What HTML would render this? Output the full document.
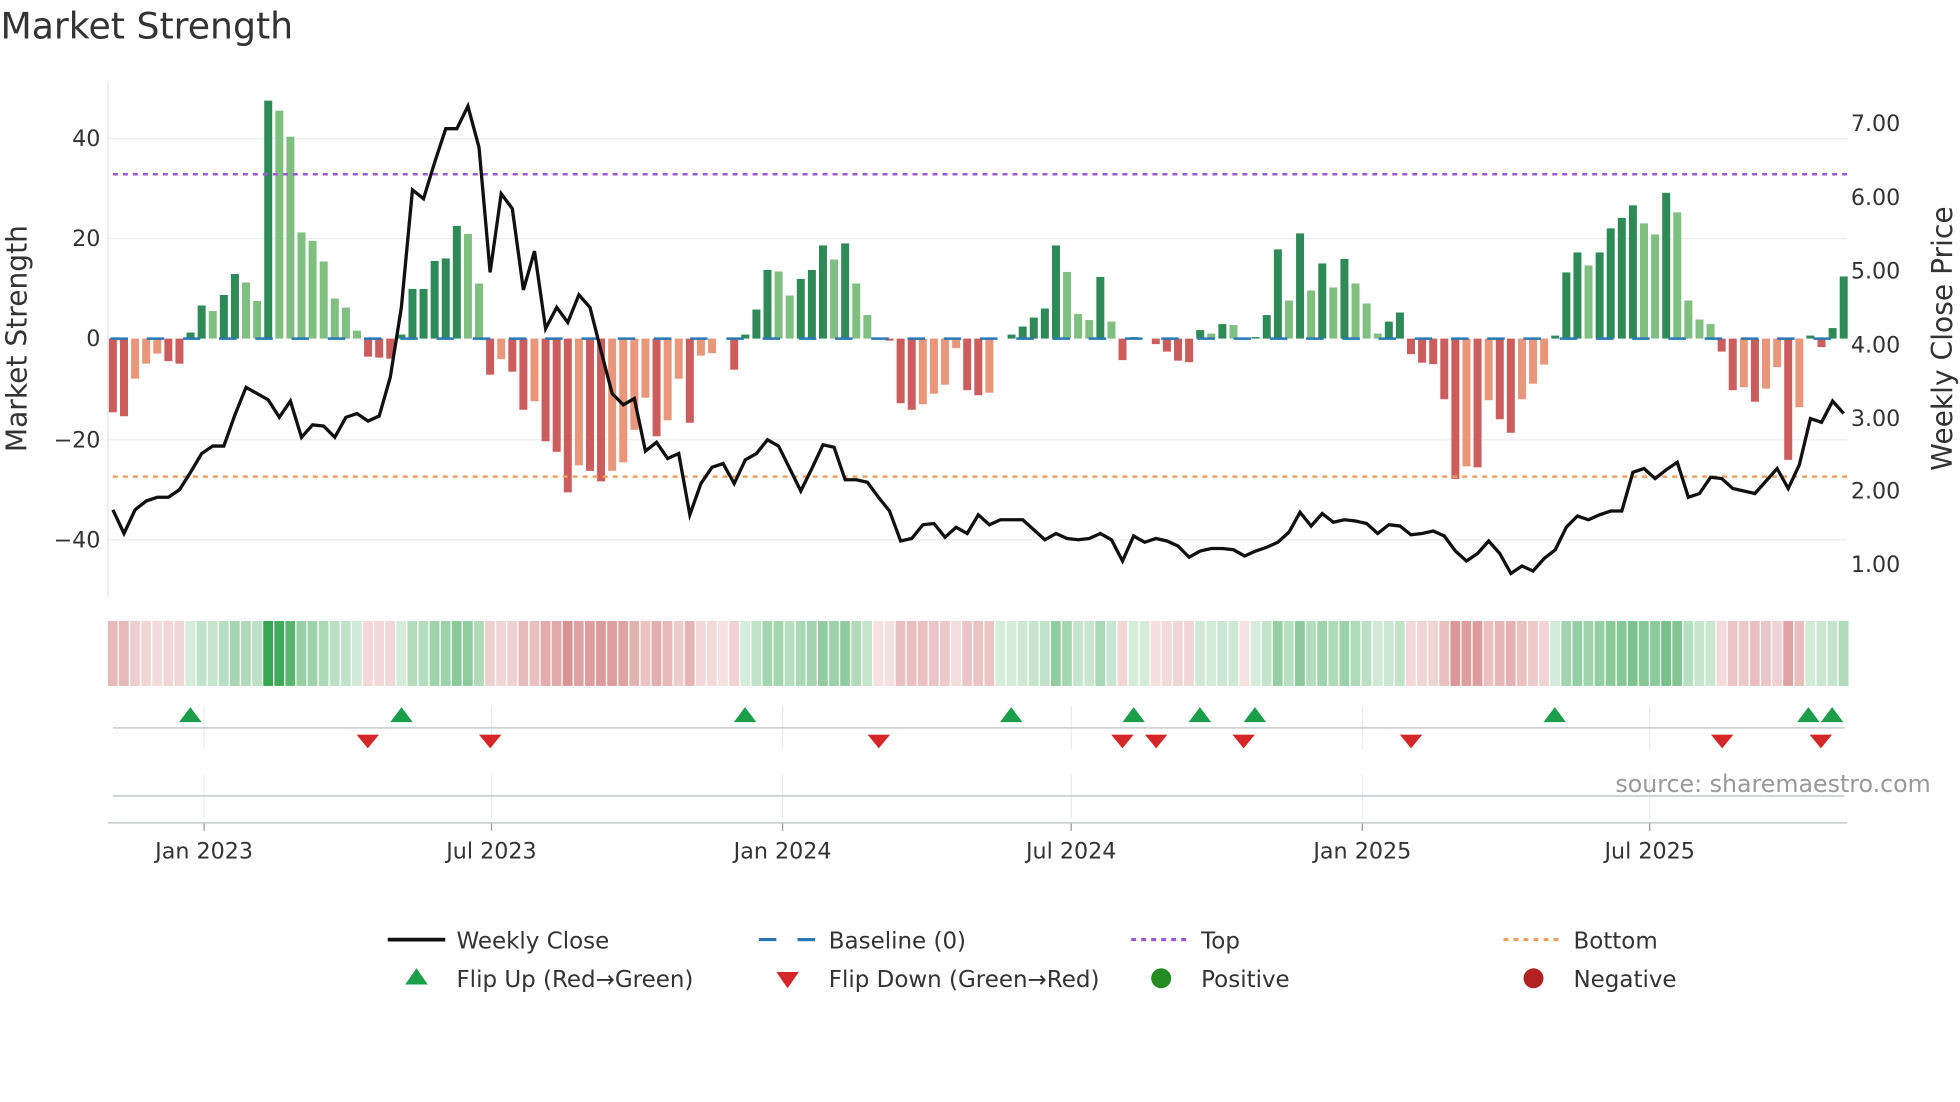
<!DOCTYPE html>
<html><head><meta charset="utf-8"><style>
html,body{margin:0;padding:0;background:#fff;}
svg{display:block;font-family:"DejaVu Sans","Liberation Sans",sans-serif;}
.a{fill:#2e8b57}.b{fill:#7fbf7f}.c{fill:#cd5c5c}.d{fill:#e9967a}
.p{fill:#2ca048}.n{fill:#cc6a6a}
.t{fill:#333;font-size:17.8px}
.lg{fill:#333;font-size:18.4px}
</style></head><body>
<svg width="1960" height="1102" viewBox="0 0 1568 882" xmlns="http://www.w3.org/2000/svg">
<rect width="1568" height="882" fill="#fff"/>
<text x="0" y="31" font-size="29" fill="#333">Market Strength</text>

<g stroke="#eceff1" stroke-width="1">
<line x1="86" x2="1478" y1="111" y2="111"/>
<line x1="86" x2="1478" y1="191" y2="191"/>
<line x1="86" x2="1478" y1="352" y2="352"/>
<line x1="86" x2="1478" y1="432" y2="432"/>
</g>
<line x1="86" x2="86" y1="65" y2="478" stroke="#e6e6e6" stroke-width="1"/>

<g class="t" text-anchor="end">
<text x="80" y="117">40</text>
<text x="80" y="197">20</text>
<text x="80" y="277">0</text>
<text x="80" y="358">−20</text>
<text x="80" y="438">−40</text>
</g>
<g class="t">
<text x="1481" y="105">7.00</text>
<text x="1481" y="164">6.00</text>
<text x="1481" y="223">5.00</text>
<text x="1481" y="282">4.00</text>
<text x="1481" y="341">3.00</text>
<text x="1481" y="399">2.00</text>
<text x="1481" y="458">1.00</text>
</g>
<text transform="translate(21,271) rotate(-90)" text-anchor="middle" font-size="22.5" fill="#333">Market Strength</text>
<text transform="translate(1562,271) rotate(-90)" text-anchor="middle" font-size="22.5" fill="#333">Weekly Close Price</text>

<g transform="translate(90,271) scale(8.88,-4.01)">
<rect x="-.36" width=".72" y="-14.7" height="14.7" class="c"/>
<rect x=".64" width=".72" y="-15.5" height="15.5" class="c"/>
<rect x="1.64" width=".72" y="-8" height="8" class="d"/>
<rect x="2.64" width=".72" y="-5" height="5" class="d"/>
<rect x="3.64" width=".72" y="-3" height="3" class="d"/>
<rect x="4.64" width=".72" y="-4.5" height="4.5" class="c"/>
<rect x="5.64" width=".72" y="-5" height="5" class="c"/>
<rect x="6.64" width=".72" y="0" height="1.2" class="a"/>
<rect x="7.64" width=".72" y="0" height="6.6" class="a"/>
<rect x="8.64" width=".72" y="0" height="5.5" class="b"/>
<rect x="9.64" width=".72" y="0" height="8.7" class="a"/>
<rect x="10.64" width=".72" y="0" height="12.9" class="a"/>
<rect x="11.64" width=".72" y="0" height="11.2" class="b"/>
<rect x="12.64" width=".72" y="0" height="7.5" class="b"/>
<rect x="13.64" width=".72" y="0" height="47.5" class="a"/>
<rect x="14.64" width=".72" y="0" height="45.5" class="b"/>
<rect x="15.64" width=".72" y="0" height="40.3" class="b"/>
<rect x="16.64" width=".72" y="0" height="21.2" class="b"/>
<rect x="17.64" width=".72" y="0" height="19.5" class="b"/>
<rect x="18.64" width=".72" y="0" height="15.4" class="b"/>
<rect x="19.64" width=".72" y="0" height="8" class="b"/>
<rect x="20.64" width=".72" y="0" height="6.2" class="b"/>
<rect x="21.64" width=".72" y="0" height="1.6" class="b"/>
<rect x="22.64" width=".72" y="-3.6" height="3.6" class="c"/>
<rect x="23.64" width=".72" y="-3.8" height="3.8" class="c"/>
<rect x="24.64" width=".72" y="-4" height="4" class="c"/>
<rect x="25.64" width=".72" y="0" height=".8" class="a"/>
<rect x="26.64" width=".72" y="0" height="9.9" class="a"/>
<rect x="27.64" width=".72" y="0" height="9.9" class="a"/>
<rect x="28.64" width=".72" y="0" height="15.5" class="a"/>
<rect x="29.64" width=".72" y="0" height="16" class="a"/>
<rect x="30.64" width=".72" y="0" height="22.5" class="a"/>
<rect x="31.64" width=".72" y="0" height="20.9" class="b"/>
<rect x="32.64" width=".72" y="0" height="11" class="b"/>
<rect x="33.64" width=".72" y="-7.2" height="7.2" class="c"/>
<rect x="34.64" width=".72" y="-4.1" height="4.1" class="d"/>
<rect x="35.64" width=".72" y="-6.6" height="6.6" class="c"/>
<rect x="36.64" width=".72" y="-14.2" height="14.2" class="c"/>
<rect x="37.64" width=".72" y="-12.5" height="12.5" class="d"/>
<rect x="38.64" width=".72" y="-20.5" height="20.5" class="c"/>
<rect x="39.64" width=".72" y="-22.6" height="22.6" class="c"/>
<rect x="40.64" width=".72" y="-30.7" height="30.7" class="c"/>
<rect x="41.64" width=".72" y="-25.3" height="25.3" class="d"/>
<rect x="42.64" width=".72" y="-26.4" height="26.4" class="c"/>
<rect x="43.64" width=".72" y="-28.5" height="28.5" class="c"/>
<rect x="44.64" width=".72" y="-26.4" height="26.4" class="d"/>
<rect x="45.64" width=".72" y="-24.7" height="24.7" class="d"/>
<rect x="46.64" width=".72" y="-18.2" height="18.2" class="d"/>
<rect x="47.64" width=".72" y="-11.8" height="11.8" class="d"/>
<rect x="48.64" width=".72" y="-19.5" height="19.5" class="c"/>
<rect x="49.64" width=".72" y="-16.3" height="16.3" class="d"/>
<rect x="50.64" width=".72" y="-8" height="8" class="d"/>
<rect x="51.64" width=".72" y="-16.8" height="16.8" class="c"/>
<rect x="52.64" width=".72" y="-3.4" height="3.4" class="d"/>
<rect x="53.64" width=".72" y="-2.9" height="2.9" class="d"/>
<rect x="55.64" width=".72" y="-6.2" height="6.2" class="c"/>
<rect x="56.64" width=".72" y="0" height=".8" class="a"/>
<rect x="57.64" width=".72" y="0" height="5.8" class="a"/>
<rect x="58.64" width=".72" y="0" height="13.7" class="a"/>
<rect x="59.64" width=".72" y="0" height="13.4" class="b"/>
<rect x="60.64" width=".72" y="0" height="8.6" class="b"/>
<rect x="61.64" width=".72" y="0" height="11.9" class="a"/>
<rect x="62.64" width=".72" y="0" height="13.7" class="a"/>
<rect x="63.64" width=".72" y="0" height="18.6" class="a"/>
<rect x="64.64" width=".72" y="0" height="15.8" class="b"/>
<rect x="65.64" width=".72" y="0" height="19" class="a"/>
<rect x="66.64" width=".72" y="0" height="11" class="b"/>
<rect x="67.64" width=".72" y="0" height="4.7" class="b"/>
<rect x="69.64" width=".72" y="-.4" height=".4" class="c"/>
<rect x="70.64" width=".72" y="-12.9" height="12.9" class="c"/>
<rect x="71.64" width=".72" y="-14.2" height="14.2" class="c"/>
<rect x="72.64" width=".72" y="-13.1" height="13.1" class="d"/>
<rect x="73.64" width=".72" y="-11" height="11" class="d"/>
<rect x="74.64" width=".72" y="-9.2" height="9.2" class="d"/>
<rect x="75.64" width=".72" y="-1.9" height="1.9" class="d"/>
<rect x="76.64" width=".72" y="-10.3" height="10.3" class="c"/>
<rect x="77.64" width=".72" y="-11.3" height="11.3" class="c"/>
<rect x="78.64" width=".72" y="-10.8" height="10.8" class="d"/>
<rect x="80.64" width=".72" y="0" height=".8" class="a"/>
<rect x="81.64" width=".72" y="0" height="2.4" class="a"/>
<rect x="82.64" width=".72" y="0" height="4.2" class="a"/>
<rect x="83.64" width=".72" y="0" height="6" class="a"/>
<rect x="84.64" width=".72" y="0" height="18.6" class="a"/>
<rect x="85.64" width=".72" y="0" height="13.3" class="b"/>
<rect x="86.64" width=".72" y="0" height="4.9" class="b"/>
<rect x="87.64" width=".72" y="0" height="3.7" class="b"/>
<rect x="88.64" width=".72" y="0" height="12.3" class="a"/>
<rect x="89.64" width=".72" y="0" height="3.4" class="b"/>
<rect x="90.64" width=".72" y="-4.3" height="4.3" class="c"/>
<rect x="91.64" width=".72" y="0" height=".3" class="a"/>
<rect x="93.64" width=".72" y="-1.1" height="1.1" class="c"/>
<rect x="94.64" width=".72" y="-2.6" height="2.6" class="c"/>
<rect x="95.64" width=".72" y="-4.4" height="4.4" class="c"/>
<rect x="96.64" width=".72" y="-4.7" height="4.7" class="c"/>
<rect x="97.64" width=".72" y="0" height="1.7" class="a"/>
<rect x="98.64" width=".72" y="0" height="1" class="b"/>
<rect x="99.64" width=".72" y="0" height="2.9" class="a"/>
<rect x="100.64" width=".72" y="0" height="2.7" class="b"/>
<rect x="102.64" width=".72" y="0" height=".3" class="a"/>
<rect x="103.64" width=".72" y="0" height="4.7" class="a"/>
<rect x="104.64" width=".72" y="0" height="17.8" class="a"/>
<rect x="105.64" width=".72" y="0" height="7.6" class="b"/>
<rect x="106.64" width=".72" y="0" height="21" class="a"/>
<rect x="107.64" width=".72" y="0" height="9.6" class="b"/>
<rect x="108.64" width=".72" y="0" height="15" class="a"/>
<rect x="109.64" width=".72" y="0" height="10.2" class="b"/>
<rect x="110.64" width=".72" y="0" height="15.9" class="a"/>
<rect x="111.64" width=".72" y="0" height="11" class="b"/>
<rect x="112.64" width=".72" y="0" height="7" class="b"/>
<rect x="113.64" width=".72" y="0" height="1" class="b"/>
<rect x="114.64" width=".72" y="0" height="3.4" class="a"/>
<rect x="115.64" width=".72" y="0" height="5.2" class="a"/>
<rect x="116.64" width=".72" y="-3.1" height="3.1" class="c"/>
<rect x="117.64" width=".72" y="-4.8" height="4.8" class="c"/>
<rect x="118.64" width=".72" y="-5.1" height="5.1" class="c"/>
<rect x="119.64" width=".72" y="-12.1" height="12.1" class="c"/>
<rect x="120.64" width=".72" y="-28" height="28" class="c"/>
<rect x="121.64" width=".72" y="-25.5" height="25.5" class="d"/>
<rect x="122.64" width=".72" y="-25.7" height="25.7" class="c"/>
<rect x="123.64" width=".72" y="-12.3" height="12.3" class="d"/>
<rect x="124.64" width=".72" y="-16.1" height="16.1" class="c"/>
<rect x="125.64" width=".72" y="-18.8" height="18.8" class="c"/>
<rect x="126.64" width=".72" y="-12.1" height="12.1" class="d"/>
<rect x="127.64" width=".72" y="-9" height="9" class="d"/>
<rect x="128.64" width=".72" y="-5.2" height="5.2" class="d"/>
<rect x="129.64" width=".72" y="0" height=".6" class="a"/>
<rect x="130.64" width=".72" y="0" height="13.2" class="a"/>
<rect x="131.64" width=".72" y="0" height="17.2" class="a"/>
<rect x="132.64" width=".72" y="0" height="14.6" class="b"/>
<rect x="133.64" width=".72" y="0" height="17.2" class="a"/>
<rect x="134.64" width=".72" y="0" height="22" class="a"/>
<rect x="135.64" width=".72" y="0" height="24.1" class="a"/>
<rect x="136.64" width=".72" y="0" height="26.6" class="a"/>
<rect x="137.64" width=".72" y="0" height="23" class="b"/>
<rect x="138.64" width=".72" y="0" height="20.8" class="b"/>
<rect x="139.64" width=".72" y="0" height="29.1" class="a"/>
<rect x="140.64" width=".72" y="0" height="25.2" class="b"/>
<rect x="141.64" width=".72" y="0" height="7.6" class="b"/>
<rect x="142.64" width=".72" y="0" height="3.8" class="b"/>
<rect x="143.64" width=".72" y="0" height="2.9" class="b"/>
<rect x="144.64" width=".72" y="-2.6" height="2.6" class="c"/>
<rect x="145.64" width=".72" y="-10.3" height="10.3" class="c"/>
<rect x="146.64" width=".72" y="-9.7" height="9.7" class="d"/>
<rect x="147.64" width=".72" y="-12.6" height="12.6" class="c"/>
<rect x="148.64" width=".72" y="-10" height="10" class="d"/>
<rect x="149.64" width=".72" y="-5.7" height="5.7" class="d"/>
<rect x="150.64" width=".72" y="-24.2" height="24.2" class="c"/>
<rect x="151.64" width=".72" y="-13.7" height="13.7" class="d"/>
<rect x="152.64" width=".72" y="0" height=".6" class="a"/>
<rect x="153.64" width=".72" y="-1.7" height="1.7" class="c"/>
<rect x="154.64" width=".72" y="0" height="2.1" class="a"/>
<rect x="155.64" width=".72" y="0" height="12.4" class="a"/>
</g>

<line x1="88" x2="1478" y1="271" y2="271" stroke="#2a77b4" stroke-width="2" stroke-dasharray="14 15"/>
<line x1="90" x2="1478" y1="139.5" y2="139.5" stroke="#9b59d6" stroke-width="2" stroke-dasharray="4 4"/>
<line x1="90" x2="1478" y1="381.5" y2="381.5" stroke="#f0a060" stroke-width="2" stroke-dasharray="4 4"/>

<g transform="translate(90,0) scale(8.88,1)">
<polyline fill="none" stroke="#111" stroke-width="3.3" stroke-linejoin="miter" vector-effect="non-scaling-stroke" points="0,408 1,427 2,408 3,401 4,398 5,398 6,392 7,378 8,363 9,357 10,357 11,332 12,310 13,315 14,320 15,334 16,321 17,350 18,340 19,341 20,350 21,334 22,331 23,337 24,333 25,302 26,246 27,152 28,159 29,130 30,103 31,103 32,85 33,118 34,218 35,155 36,167 37,232 38,201 39,263 40,246 41,258 42,236 43,246 44,281 45,315 46,324 47,319 48,361 49,354 50,367 51,363 52,412 53,387 54,374 55,371 56,387 57,368 58,363 59,352 60,357 61,375 62,393 63,375 64,356 65,358 66,384 67,384 68,386 69,398 70,409 71,433 72,431 73,420 74,419 75,430 76,422 77,427 78,412 79,420 80,416 81,416 82,416 83,424 84,432 85,427 86,431 87,432 88,431 89,427 90,432 91,449 92,429 93,434 94,431 95,433 96,437 97,446 98,441 99,439 100,439 101,440 102,445 103,441 104,438 105,434 106,426 107,410 108,421 109,411 110,418 111,416 112,417 113,419 114,427 115,420 116,421 117,428 118,427 119,425 120,429 121,441 122,449 123,443 124,433 125,443 126,459 127,453 128,457 129,447 130,440 131,422 132,413 133,416 134,412 135,409 136,409 137,378 138,375 139,383 140,376 141,370 142,398 143,395 144,382 145,383 146,391 147,393 148,395 149,385 150,375 151,391 152,372 153,335 154,338 155,321 156,331"/>
</g>

<g transform="translate(90,0) scale(8.88,1)">
<rect x="-.45" width=".88" y="497" height="52" class="n" opacity=".47"/>
<rect x=".55" width=".88" y="497" height="52" class="n" opacity=".48"/>
<rect x="1.55" width=".88" y="497" height="52" class="n" opacity=".33"/>
<rect x="2.55" width=".88" y="497" height="52" class="n" opacity=".28"/>
<rect x="3.55" width=".88" y="497" height="52" class="n" opacity=".24"/>
<rect x="4.55" width=".88" y="497" height="52" class="n" opacity=".27"/>
<rect x="5.55" width=".88" y="497" height="52" class="n" opacity=".28"/>
<rect x="6.55" width=".88" y="497" height="52" class="p" opacity=".2"/>
<rect x="7.55" width=".88" y="497" height="52" class="p" opacity=".3"/>
<rect x="8.55" width=".88" y="497" height="52" class="p" opacity=".28"/>
<rect x="9.55" width=".88" y="497" height="52" class="p" opacity=".34"/>
<rect x="10.55" width=".88" y="497" height="52" class="p" opacity=".42"/>
<rect x="11.55" width=".88" y="497" height="52" class="p" opacity=".38"/>
<rect x="12.55" width=".88" y="497" height="52" class="p" opacity=".32"/>
<rect x="13.55" width=".88" y="497" height="52" class="p" opacity=".95"/>
<rect x="14.55" width=".88" y="497" height="52" class="p" opacity=".9"/>
<rect x="15.55" width=".88" y="497" height="52" class="p" opacity=".78"/>
<rect x="16.55" width=".88" y="497" height="52" class="p" opacity=".5"/>
<rect x="17.55" width=".88" y="497" height="52" class="p" opacity=".46"/>
<rect x="18.55" width=".88" y="497" height="52" class="p" opacity=".4"/>
<rect x="19.55" width=".88" y="497" height="52" class="p" opacity=".33"/>
<rect x="20.55" width=".88" y="497" height="52" class="p" opacity=".3"/>
<rect x="21.55" width=".88" y="497" height="52" class="p" opacity=".22"/>
<rect x="22.55" width=".88" y="497" height="52" class="n" opacity=".26"/>
<rect x="23.55" width=".88" y="497" height="52" class="n" opacity=".26"/>
<rect x="24.55" width=".88" y="497" height="52" class="n" opacity=".27"/>
<rect x="25.55" width=".88" y="497" height="52" class="p" opacity=".2"/>
<rect x="26.55" width=".88" y="497" height="52" class="p" opacity=".36"/>
<rect x="27.55" width=".88" y="497" height="52" class="p" opacity=".36"/>
<rect x="28.55" width=".88" y="497" height="52" class="p" opacity=".46"/>
<rect x="29.55" width=".88" y="497" height="52" class="p" opacity=".47"/>
<rect x="30.55" width=".88" y="497" height="52" class="p" opacity=".56"/>
<rect x="31.55" width=".88" y="497" height="52" class="p" opacity=".54"/>
<rect x="32.55" width=".88" y="497" height="52" class="p" opacity=".38"/>
<rect x="33.55" width=".88" y="497" height="52" class="n" opacity=".32"/>
<rect x="34.55" width=".88" y="497" height="52" class="n" opacity=".28"/>
<rect x="35.55" width=".88" y="497" height="52" class="n" opacity=".31"/>
<rect x="36.55" width=".88" y="497" height="52" class="n" opacity=".46"/>
<rect x="37.55" width=".88" y="497" height="52" class="n" opacity=".43"/>
<rect x="38.55" width=".88" y="497" height="52" class="n" opacity=".55"/>
<rect x="39.55" width=".88" y="497" height="52" class="n" opacity=".58"/>
<rect x="40.55" width=".88" y="497" height="52" class="n" opacity=".72"/>
<rect x="41.55" width=".88" y="497" height="52" class="n" opacity=".63"/>
<rect x="42.55" width=".88" y="497" height="52" class="n" opacity=".65"/>
<rect x="43.55" width=".88" y="497" height="52" class="n" opacity=".68"/>
<rect x="44.55" width=".88" y="497" height="52" class="n" opacity=".65"/>
<rect x="45.55" width=".88" y="497" height="52" class="n" opacity=".62"/>
<rect x="46.55" width=".88" y="497" height="52" class="n" opacity=".52"/>
<rect x="47.55" width=".88" y="497" height="52" class="n" opacity=".4"/>
<rect x="48.55" width=".88" y="497" height="52" class="n" opacity=".54"/>
<rect x="49.55" width=".88" y="497" height="52" class="n" opacity=".48"/>
<rect x="50.55" width=".88" y="497" height="52" class="n" opacity=".34"/>
<rect x="51.55" width=".88" y="497" height="52" class="n" opacity=".5"/>
<rect x="52.55" width=".88" y="497" height="52" class="n" opacity=".26"/>
<rect x="53.55" width=".88" y="497" height="52" class="n" opacity=".25"/>
<rect x="54.55" width=".88" y="497" height="52" class="n" opacity=".2"/>
<rect x="55.55" width=".88" y="497" height="52" class="n" opacity=".3"/>
<rect x="56.55" width=".88" y="497" height="52" class="p" opacity=".2"/>
<rect x="57.55" width=".88" y="497" height="52" class="p" opacity=".3"/>
<rect x="58.55" width=".88" y="497" height="52" class="p" opacity=".44"/>
<rect x="59.55" width=".88" y="497" height="52" class="p" opacity=".43"/>
<rect x="60.55" width=".88" y="497" height="52" class="p" opacity=".35"/>
<rect x="61.55" width=".88" y="497" height="52" class="p" opacity=".41"/>
<rect x="62.55" width=".88" y="497" height="52" class="p" opacity=".44"/>
<rect x="63.55" width=".88" y="497" height="52" class="p" opacity=".52"/>
<rect x="64.55" width=".88" y="497" height="52" class="p" opacity=".47"/>
<rect x="65.55" width=".88" y="497" height="52" class="p" opacity=".53"/>
<rect x="66.55" width=".88" y="497" height="52" class="p" opacity=".38"/>
<rect x="67.55" width=".88" y="497" height="52" class="p" opacity=".28"/>
<rect x="68.55" width=".88" y="497" height="52" class="n" opacity=".2"/>
<rect x="69.55" width=".88" y="497" height="52" class="n" opacity=".2"/>
<rect x="70.55" width=".88" y="497" height="52" class="n" opacity=".42"/>
<rect x="71.55" width=".88" y="497" height="52" class="n" opacity=".44"/>
<rect x="72.55" width=".88" y="497" height="52" class="n" opacity=".42"/>
<rect x="73.55" width=".88" y="497" height="52" class="n" opacity=".39"/>
<rect x="74.55" width=".88" y="497" height="52" class="n" opacity=".36"/>
<rect x="75.55" width=".88" y="497" height="52" class="n" opacity=".23"/>
<rect x="76.55" width=".88" y="497" height="52" class="n" opacity=".38"/>
<rect x="77.55" width=".88" y="497" height="52" class="n" opacity=".4"/>
<rect x="78.55" width=".88" y="497" height="52" class="n" opacity=".39"/>
<rect x="79.55" width=".88" y="497" height="52" class="p" opacity=".2"/>
<rect x="80.55" width=".88" y="497" height="52" class="p" opacity=".2"/>
<rect x="81.55" width=".88" y="497" height="52" class="p" opacity=".24"/>
<rect x="82.55" width=".88" y="497" height="52" class="p" opacity=".27"/>
<rect x="83.55" width=".88" y="497" height="52" class="p" opacity=".3"/>
<rect x="84.55" width=".88" y="497" height="52" class="p" opacity=".52"/>
<rect x="85.55" width=".88" y="497" height="52" class="p" opacity=".43"/>
<rect x="86.55" width=".88" y="497" height="52" class="p" opacity=".28"/>
<rect x="87.55" width=".88" y="497" height="52" class="p" opacity=".26"/>
<rect x="88.55" width=".88" y="497" height="52" class="p" opacity=".41"/>
<rect x="89.55" width=".88" y="497" height="52" class="p" opacity=".26"/>
<rect x="90.55" width=".88" y="497" height="52" class="n" opacity=".28"/>
<rect x="91.55" width=".88" y="497" height="52" class="p" opacity=".2"/>
<rect x="92.55" width=".88" y="497" height="52" class="p" opacity=".2"/>
<rect x="93.55" width=".88" y="497" height="52" class="n" opacity=".22"/>
<rect x="94.55" width=".88" y="497" height="52" class="n" opacity=".25"/>
<rect x="95.55" width=".88" y="497" height="52" class="n" opacity=".28"/>
<rect x="96.55" width=".88" y="497" height="52" class="n" opacity=".28"/>
<rect x="97.55" width=".88" y="497" height="52" class="p" opacity=".22"/>
<rect x="98.55" width=".88" y="497" height="52" class="p" opacity=".21"/>
<rect x="99.55" width=".88" y="497" height="52" class="p" opacity=".25"/>
<rect x="100.55" width=".88" y="497" height="52" class="p" opacity=".24"/>
<rect x="101.55" width=".88" y="497" height="52" class="n" opacity=".2"/>
<rect x="102.55" width=".88" y="497" height="52" class="p" opacity=".2"/>
<rect x="103.55" width=".88" y="497" height="52" class="p" opacity=".28"/>
<rect x="104.55" width=".88" y="497" height="52" class="p" opacity=".5"/>
<rect x="105.55" width=".88" y="497" height="52" class="p" opacity=".34"/>
<rect x="106.55" width=".88" y="497" height="52" class="p" opacity=".55"/>
<rect x="107.55" width=".88" y="497" height="52" class="p" opacity=".36"/>
<rect x="108.55" width=".88" y="497" height="52" class="p" opacity=".46"/>
<rect x="109.55" width=".88" y="497" height="52" class="p" opacity=".38"/>
<rect x="110.55" width=".88" y="497" height="52" class="p" opacity=".47"/>
<rect x="111.55" width=".88" y="497" height="52" class="p" opacity=".39"/>
<rect x="112.55" width=".88" y="497" height="52" class="p" opacity=".32"/>
<rect x="113.55" width=".88" y="497" height="52" class="p" opacity=".22"/>
<rect x="114.55" width=".88" y="497" height="52" class="p" opacity=".26"/>
<rect x="115.55" width=".88" y="497" height="52" class="p" opacity=".29"/>
<rect x="116.55" width=".88" y="497" height="52" class="n" opacity=".26"/>
<rect x="117.55" width=".88" y="497" height="52" class="n" opacity=".29"/>
<rect x="118.55" width=".88" y="497" height="52" class="n" opacity=".29"/>
<rect x="119.55" width=".88" y="497" height="52" class="n" opacity=".42"/>
<rect x="120.55" width=".88" y="497" height="52" class="n" opacity=".7"/>
<rect x="121.55" width=".88" y="497" height="52" class="n" opacity=".65"/>
<rect x="122.55" width=".88" y="497" height="52" class="n" opacity=".66"/>
<rect x="123.55" width=".88" y="497" height="52" class="n" opacity=".42"/>
<rect x="124.55" width=".88" y="497" height="52" class="n" opacity=".49"/>
<rect x="125.55" width=".88" y="497" height="52" class="n" opacity=".53"/>
<rect x="126.55" width=".88" y="497" height="52" class="n" opacity=".42"/>
<rect x="127.55" width=".88" y="497" height="52" class="n" opacity=".36"/>
<rect x="128.55" width=".88" y="497" height="52" class="n" opacity=".29"/>
<rect x="129.55" width=".88" y="497" height="52" class="p" opacity=".21"/>
<rect x="130.55" width=".88" y="497" height="52" class="p" opacity=".44"/>
<rect x="131.55" width=".88" y="497" height="52" class="p" opacity=".51"/>
<rect x="132.55" width=".88" y="497" height="52" class="p" opacity=".46"/>
<rect x="133.55" width=".88" y="497" height="52" class="p" opacity=".51"/>
<rect x="134.55" width=".88" y="497" height="52" class="p" opacity=".56"/>
<rect x="135.55" width=".88" y="497" height="52" class="p" opacity=".58"/>
<rect x="136.55" width=".88" y="497" height="52" class="p" opacity=".62"/>
<rect x="137.55" width=".88" y="497" height="52" class="p" opacity=".58"/>
<rect x="138.55" width=".88" y="497" height="52" class="p" opacity=".55"/>
<rect x="139.55" width=".88" y="497" height="52" class="p" opacity=".65"/>
<rect x="140.55" width=".88" y="497" height="52" class="p" opacity=".6"/>
<rect x="141.55" width=".88" y="497" height="52" class="p" opacity=".34"/>
<rect x="142.55" width=".88" y="497" height="52" class="p" opacity=".27"/>
<rect x="143.55" width=".88" y="497" height="52" class="p" opacity=".25"/>
<rect x="144.55" width=".88" y="497" height="52" class="n" opacity=".25"/>
<rect x="145.55" width=".88" y="497" height="52" class="n" opacity=".38"/>
<rect x="146.55" width=".88" y="497" height="52" class="n" opacity=".37"/>
<rect x="147.55" width=".88" y="497" height="52" class="n" opacity=".43"/>
<rect x="148.55" width=".88" y="497" height="52" class="n" opacity=".38"/>
<rect x="149.55" width=".88" y="497" height="52" class="n" opacity=".3"/>
<rect x="150.55" width=".88" y="497" height="52" class="n" opacity=".62"/>
<rect x="151.55" width=".88" y="497" height="52" class="n" opacity=".44"/>
<rect x="152.55" width=".88" y="497" height="52" class="p" opacity=".21"/>
<rect x="153.55" width=".88" y="497" height="52" class="p" opacity=".25"/>
<rect x="154.55" width=".88" y="497" height="52" class="p" opacity=".28"/>
<rect x="155.55" width=".88" y="497" height="52" class="p" opacity=".38"/>
</g>

<g stroke="#e8ecef" stroke-width="1">
<line x1="163" x2="163" y1="565" y2="600"/><line x1="393" x2="393" y1="565" y2="600"/><line x1="626" x2="626" y1="565" y2="600"/><line x1="857" x2="857" y1="565" y2="600"/><line x1="1090" x2="1090" y1="565" y2="600"/><line x1="1320" x2="1320" y1="565" y2="600"/>
<line x1="163" x2="163" y1="620" y2="655"/><line x1="393" x2="393" y1="620" y2="655"/><line x1="626" x2="626" y1="620" y2="655"/><line x1="857" x2="857" y1="620" y2="655"/><line x1="1090" x2="1090" y1="620" y2="655"/><line x1="1320" x2="1320" y1="620" y2="655"/>
</g>
<line x1="90" x2="1476" y1="582.5" y2="582.5" stroke="#cfd2d4" stroke-width="1.5"/>
<line x1="90" x2="1476" y1="637" y2="637" stroke="#cfd2d4" stroke-width="1.5"/>
<line x1="86" x2="1478" y1="658.5" y2="658.5" stroke="#cfd2d4" stroke-width="1.5"/>
<g stroke="#999" stroke-width="1">
<line x1="163" x2="163" y1="659" y2="665"/><line x1="393" x2="393" y1="659" y2="665"/><line x1="626" x2="626" y1="659" y2="665"/><line x1="857" x2="857" y1="659" y2="665"/><line x1="1090" x2="1090" y1="659" y2="665"/><line x1="1320" x2="1320" y1="659" y2="665"/>
</g>
<g fill="#1a9e4a">
<polygon points="143,578 152,566 161,578"/>
<polygon points="312,578 321,566 330,578"/>
<polygon points="587,578 596,566 605,578"/>
<polygon points="800,578 809,566 818,578"/>
<polygon points="898,578 907,566 916,578"/>
<polygon points="951,578 960,566 969,578"/>
<polygon points="995,578 1004,566 1013,578"/>
<polygon points="1235,578 1244,566 1253,578"/>
<polygon points="1438,578 1447,566 1456,578"/>
<polygon points="1457,578 1466,566 1475,578"/>
</g>
<g fill="#d62728">
<polygon points="285,588 303,588 294,599"/>
<polygon points="383,588 401,588 392,599"/>
<polygon points="694,588 712,588 703,599"/>
<polygon points="889,588 907,588 898,599"/>
<polygon points="916,588 934,588 925,599"/>
<polygon points="986,588 1004,588 995,599"/>
<polygon points="1120,588 1138,588 1129,599"/>
<polygon points="1369,588 1387,588 1378,599"/>
<polygon points="1448,588 1466,588 1457,599"/>
</g>
<text x="1545" y="634" text-anchor="end" font-size="19" fill="#999">source: sharemaestro.com</text>

<g class="t" text-anchor="middle" font-size="17">
<text x="163" y="687">Jan 2023</text>
<text x="393" y="687">Jul 2023</text>
<text x="626" y="687">Jan 2024</text>
<text x="857" y="687">Jul 2024</text>
<text x="1090" y="687">Jan 2025</text>
<text x="1320" y="687">Jul 2025</text>
</g>

<line x1="310" x2="356" y1="752" y2="752" stroke="#111" stroke-width="3"/>
<text x="365" y="759" class="lg">Weekly Close</text>
<line x1="607" x2="652" y1="752" y2="752" stroke="#2a77b4" stroke-width="2.5" stroke-dasharray="14 17"/>
<line x1="638" x2="652" y1="752" y2="752" stroke="#2a77b4" stroke-width="2.5"/>
<text x="663" y="759" class="lg">Baseline (0)</text>
<line x1="905" x2="949" y1="752" y2="752" stroke="#9b59d6" stroke-width="2.5" stroke-dasharray="4 4"/>
<text x="961" y="759" class="lg">Top</text>
<line x1="1203" x2="1248" y1="752" y2="752" stroke="#f0a060" stroke-width="2.5" stroke-dasharray="4 4"/>
<text x="1259" y="759" class="lg">Bottom</text>
<polygon points="324,788 333,775 342,788" fill="#1a9e4a"/>
<text x="365" y="790" class="lg">Flip Up (Red→Green)</text>
<polygon points="621,778 639,778 630,791" fill="#d62728"/>
<text x="663" y="790" class="lg">Flip Down (Green→Red)</text>
<circle cx="929" cy="783" r="8" fill="#228b22"/>
<text x="961" y="790" class="lg">Positive</text>
<circle cx="1227" cy="783" r="8" fill="#b22222"/>
<text x="1259" y="790" class="lg">Negative</text>
</svg>
</body></html>
